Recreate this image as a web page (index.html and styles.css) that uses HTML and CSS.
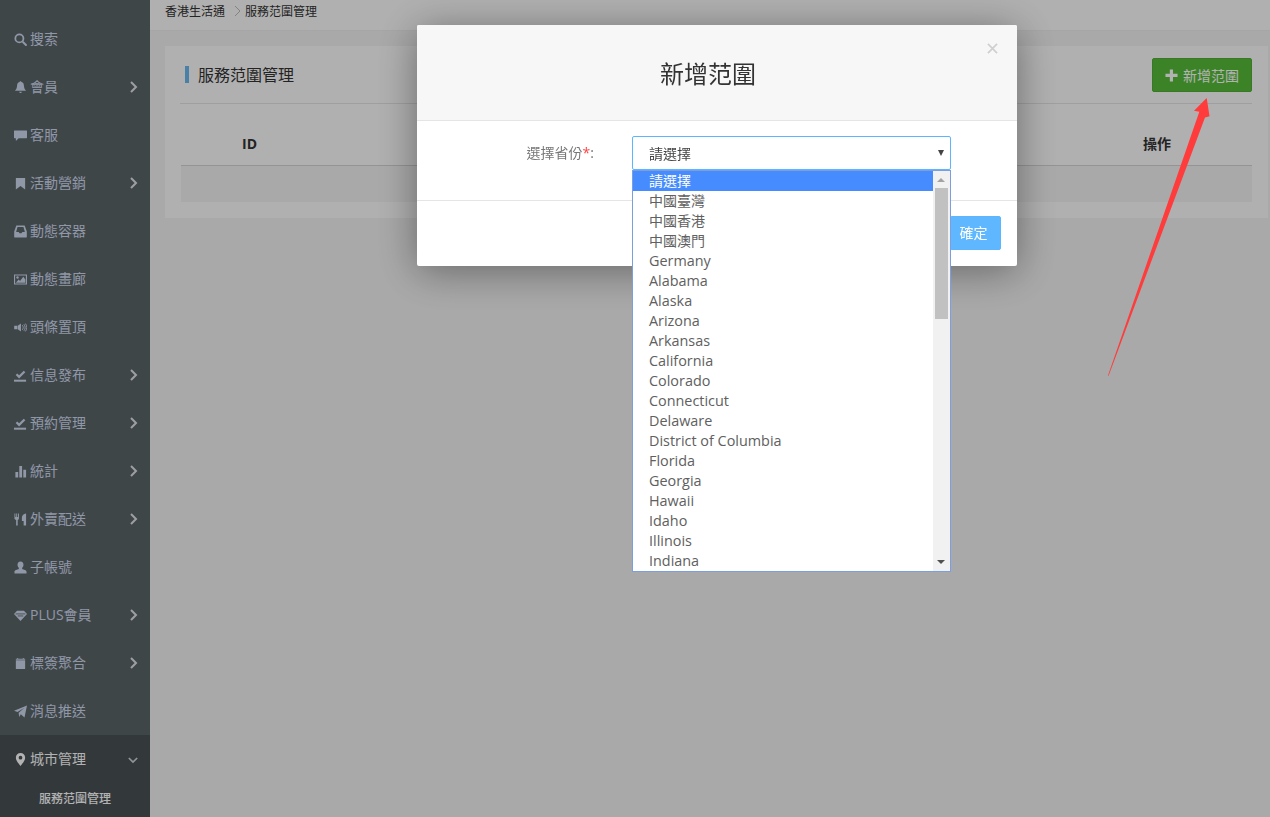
FILE: index.html
```html
<!DOCTYPE html>
<html lang="zh-Hant">
<head>
<meta charset="utf-8">
<title>服務范圍管理</title>
<link rel="stylesheet" href="styles.css">
</head>
<body>
<svg class="defs" width="0" height="0" aria-hidden="true">
  <symbol id="i-search" viewBox="0 0 14 14"><path d="M5.800 0.500a5.300 5.300 0 1 0 0 10.600a5.300 5.300 0 0 0 0-10.600zm0 1.900a3.400 3.400 0 1 1 0 6.800a3.400 3.400 0 0 1 0-6.800z" fill-rule="evenodd"/><path d="M8.600 10.200l1.500-1.500 3.500 3.500a1 1 0 0 1-1.500 1.500z"/></symbol>
  <symbol id="i-bell" viewBox="0 0 14 14"><path d="M7 0.200c.7 0 1 .5 1 1 2 .5 2.600 2 2.700 4 .1 2.600 1 3.900 2.300 5.400H1c1.300-1.500 2.200-2.800 2.300-5.400.1-2 .7-3.500 2.700-4 0-.5.300-1 1-1zM5.600 11.500h2.800a1.400 1.400 0 0 1-2.800 0z"/></symbol>
  <symbol id="i-comment" viewBox="0 0 14 14"><path d="M0.500 1.500h13c.3 0 .5.200.5.500v7.500c0 .3-.2.500-.5.500H5l-3 3V10H.5c-.3 0-.5-.2-.5-.5V2c0-.3.200-.5.500-.5z"/></symbol>
  <symbol id="i-bookmark" viewBox="0 0 14 14"><path d="M2 1h10v12.500L7 9.800 2 13.500z"/></symbol>
  <symbol id="i-inbox" viewBox="0 0 14 14"><path fill-rule="evenodd" d="M2.500 .5h9l2.300 6.500v6a.5.500 0 0 1-.5.500H.7a.5.500 0 0 1-.5-.500V7zM3.800 2.200L2.300 7.500h2.700l1 1.500h2l1-1.500h2.700l-1.500-5.300z"/></symbol>
  <symbol id="i-picture" viewBox="0 0 14 14"><path fill-rule="evenodd" d="M0 1.500h14v11H0zM1.200 2.700v8.600h11.600V2.700z"/><path d="M2 10.500l3-3.500 1.500 1.500 3.500-4.500 2.200 3v3.500z"/><circle cx="3.800" cy="4.800" r="1.300"/></symbol>
  <symbol id="i-volume" viewBox="0 0 14 14"><path d="M0.200 5h3.300v4H.2zM4 5L7.500 2.800v8.400L4 9z"/><path d="M9 4.500c1.200 1.600 1.200 3.500 0 5M10.700 3.500c1.700 2.200 1.700 5 0 7M12.300 2.800c2 2.600 2 5.800 0 8.400" fill="none" stroke="currentColor"/></symbol>
  <symbol id="i-saved" viewBox="0 0 14 14"><path d="M1.800 6.500l1.700-1.700 2 2L10.500 1.800l1.700 1.700-6.700 6.700z"/><path d="M0 11.500h13v2.200H0z"/></symbol>
  <symbol id="i-stats" viewBox="0 0 14 14"><path d="M1.500 7.500h3V13.500h-3zM5.700 1h3V13.500h-3zM10 5h3V13.500h-3z"/></symbol>
  <symbol id="i-cutlery" viewBox="0 0 14 14"><path d="M0.500 .5h1v3.800h.9V.5h1v3.800h.9V.5h1v5.500c0 .8-.7 1.300-1.300 1.500V13.500H2.300V7.500C1.600 7.300.5 6.800.5 6zM8.500 5c0-2 1.500-4.200 4.500-4.500V13.500H10.400V8.500H8.500z"/></symbol>
  <symbol id="i-user" viewBox="0 0 14 14"><path d="M7 .5c2.200 0 3.200 1.500 3.200 3.500 0 1.400-.5 2.700-1.400 3.400v1.100c1.600.6 4.700 1 4.700 3.200v1.800H.5V11.700c0-2.200 3.100-2.600 4.700-3.200V7.400C4.300 6.700 3.800 5.400 3.800 4 3.800 2 4.800.5 7 .5z"/></symbol>
  <symbol id="i-gem" viewBox="0 0 14 14"><path d="M3.300 1.800h7.400l3.300 3.700L7 13 0 5.500z"/><path d="M1.800 5.300h10.400M4 7.500h6" fill="none" stroke="#5b6568" stroke-width=".9"/></symbol>
  <symbol id="i-calendar" viewBox="0 0 14 14"><path d="M2 1.800h1.500V1h1v.8h5V1h1v.8H12V3H2zM2 3.600h10V13H2z"/></symbol>
  <symbol id="i-send" viewBox="0 0 14 14"><path d="M14 .5L11.300 13.500 7.300 9.900 5.600 13 5 8.300 11 3.200 3.800 7.500 0 6.300z"/></symbol>
  <symbol id="i-marker" viewBox="0 0 14 14"><path fill-rule="evenodd" d="M7 0a5 5 0 0 1 5 5C12 8.300 8.500 11.700 7 14 5.500 11.700 2 8.300 2 5A5 5 0 0 1 7 0zM7 3a2 2 0 1 0 0 4a2 2 0 0 0 0-4z"/></symbol>
  <symbol id="i-right" viewBox="0 0 8 12"><path d="M1 1l5 5-5 5" fill="none" stroke="currentColor" stroke-width="2"/></symbol>
  <symbol id="i-down" viewBox="0 0 12 8"><path d="M1 1l5 5 5-5" fill="none" stroke="currentColor" stroke-width="2"/></symbol>
  <symbol id="i-plus" viewBox="0 0 14 14"><path d="M5.200 0.500h3.400v4.700h4.900v3.400H8.600v4.900H5.200V8.600H.5V5.200h4.700z"/></symbol>
  <symbol id="i-close" viewBox="0 0 12 12"><path d="M1 1l10 10M11 1L1 11" fill="none" stroke="currentColor" stroke-width="1.800"/></symbol>
</svg>

<div class="app">
  <nav class="sidebar">
    <a class="nav-item"><svg class="nav-icon"><use href="#i-search"/></svg><span class="nav-label">搜索</span></a>
    <a class="nav-item"><svg class="nav-icon"><use href="#i-bell"/></svg><span class="nav-label">會員</span><svg class="nav-caret"><use href="#i-right"/></svg></a>
    <a class="nav-item"><svg class="nav-icon"><use href="#i-comment"/></svg><span class="nav-label">客服</span></a>
    <a class="nav-item"><svg class="nav-icon"><use href="#i-bookmark"/></svg><span class="nav-label">活動營銷</span><svg class="nav-caret"><use href="#i-right"/></svg></a>
    <a class="nav-item"><svg class="nav-icon"><use href="#i-inbox"/></svg><span class="nav-label">動態容器</span></a>
    <a class="nav-item"><svg class="nav-icon"><use href="#i-picture"/></svg><span class="nav-label">動態畫廊</span></a>
    <a class="nav-item"><svg class="nav-icon"><use href="#i-volume"/></svg><span class="nav-label">頭條置頂</span></a>
    <a class="nav-item"><svg class="nav-icon"><use href="#i-saved"/></svg><span class="nav-label">信息發布</span><svg class="nav-caret"><use href="#i-right"/></svg></a>
    <a class="nav-item"><svg class="nav-icon"><use href="#i-saved"/></svg><span class="nav-label">預約管理</span><svg class="nav-caret"><use href="#i-right"/></svg></a>
    <a class="nav-item"><svg class="nav-icon"><use href="#i-stats"/></svg><span class="nav-label">統計</span><svg class="nav-caret"><use href="#i-right"/></svg></a>
    <a class="nav-item"><svg class="nav-icon"><use href="#i-cutlery"/></svg><span class="nav-label">外賣配送</span><svg class="nav-caret"><use href="#i-right"/></svg></a>
    <a class="nav-item"><svg class="nav-icon"><use href="#i-user"/></svg><span class="nav-label">子帳號</span></a>
    <a class="nav-item"><svg class="nav-icon"><use href="#i-gem"/></svg><span class="nav-label">PLUS會員</span><svg class="nav-caret"><use href="#i-right"/></svg></a>
    <a class="nav-item"><svg class="nav-icon"><use href="#i-calendar"/></svg><span class="nav-label">標簽聚合</span><svg class="nav-caret"><use href="#i-right"/></svg></a>
    <a class="nav-item"><svg class="nav-icon"><use href="#i-send"/></svg><span class="nav-label">消息推送</span></a>
    <div class="nav-group">
      <a class="nav-item nav-item-open"><svg class="nav-icon"><use href="#i-marker"/></svg><span class="nav-label">城市管理</span><svg class="nav-caret-down"><use href="#i-down"/></svg></a>
      <a class="nav-sub">服務范圍管理</a>
    </div>
  </nav>

  <main class="main">
    <div class="crumbs">
      <span>香港生活通</span>
      <svg class="crumb-sep" viewBox="0 0 8 12"><path d="M1 1l5 5-5 5" fill="none" stroke="currentColor"/></svg>
      <span>服務范圍管理</span>
    </div>
    <div class="content">
      <section class="card">
        <header class="card-head">
          <h2 class="card-title">服務范圍管理</h2>
          <button class="btn-add"><svg class="btn-add-icon"><use href="#i-plus"/></svg>新增范圍</button>
        </header>
        <div class="table-head"><span>ID</span><span>操作</span></div>
        <div class="table-empty"></div>
      </section>
    </div>
  </main>
</div>

<div class="overlay"></div>

<div class="modal">
  <header class="modal-head">
    <h1 class="modal-title">新增范圍</h1>
    <svg class="modal-close"><use href="#i-close"/></svg>
  </header>
  <div class="modal-body">
    <label class="field-label">選擇省份<span class="req">*</span>:</label>
    <div class="select">
      <span>請選擇</span>
      <i class="select-caret"></i>
      <div class="dropdown">
        <ul class="options">
          <li class="option-active">請選擇</li>
          <li>中國臺灣</li>
          <li>中國香港</li>
          <li>中國澳門</li>
          <li class="option-latin">Germany</li>
          <li class="option-latin">Alabama</li>
          <li class="option-latin">Alaska</li>
          <li class="option-latin">Arizona</li>
          <li class="option-latin">Arkansas</li>
          <li class="option-latin">California</li>
          <li class="option-latin">Colorado</li>
          <li class="option-latin">Connecticut</li>
          <li class="option-latin">Delaware</li>
          <li class="option-latin">District of Columbia</li>
          <li class="option-latin">Florida</li>
          <li class="option-latin">Georgia</li>
          <li class="option-latin">Hawaii</li>
          <li class="option-latin">Idaho</li>
          <li class="option-latin">Illinois</li>
          <li class="option-latin">Indiana</li>
        </ul>
        <div class="scrollbar">
          <i class="scroll-up"></i>
          <div class="scroll-thumb"></div>
          <i class="scroll-down"></i>
        </div>
      </div>
    </div>
  </div>
  <footer class="modal-foot"><button class="btn-ok">確定</button></footer>
</div>

<svg class="arrow" viewBox="0 0 1270 817" aria-hidden="true">
  <polygon points="1206.700,98 1209.500,116.300 1205,117.500 1108.500,376 1108,375.500 1199.300,111.700 1194,110.700"/>
</svg>
</body>
</html>
```

FILE: styles.css
```css
* { box-sizing: border-box; }

html, body {
  margin: 0;
  height: 817px;
  overflow: hidden;
}

body {
  font-family: "Open Sans", "Noto Sans CJK TC", sans-serif;
  font-size: 14px;
  color: #333;
  background: #f2f2f2;
}

.defs { position: absolute; }

.app {
  display: flex;
  height: 817px;
}

/* sidebar */
.sidebar {
  flex: 0 0 150px;
  height: 817px;
  padding-top: 15px;
  background: #5b6568;
  overflow: hidden;
}

.nav-item {
  display: flex;
  align-items: center;
  height: 48px;
  padding-left: 14px;
  color: #ced8ee;
}

.nav-icon {
  flex: 0 0 13px;
  width: 13px;
  height: 13px;
  margin-right: 3px;
  fill: currentColor;
}

.nav-label { flex: 1; line-height: 20px; }

.nav-caret {
  flex: 0 0 8px;
  width: 8px;
  height: 12px;
  margin-right: 12px;
  color: #e0e4ea;
}

.nav-caret-down {
  flex: 0 0 10px;
  width: 10px;
  height: 7px;
  margin: 2px 12px 0 0;
  color: #d0d6dc;
}

.nav-group { background: #495155; }

.nav-item-open { color: #fff; }

.nav-sub {
  display: block;
  height: 34px;
  padding: 7px 0 0 39px;
  font-size: 12px;
  font-weight: 500;
  line-height: 18px;
  color: #fff;
}

/* main */
.main {
  flex: 1;
  min-width: 0;
}

.crumbs {
  display: flex;
  align-items: center;
  height: 31px;
  padding: 0 0 8px 15px;
  font-size: 12px;
  color: #333;
  background: #fdfdfd;
  border-bottom: 1px solid #eee;
}

.crumb-sep {
  width: 8px;
  height: 12px;
  margin: 0 3px 0 9px;
  color: #bbb;
}

.content { padding: 15px 2px 0 15px; }

.card {
  height: 172px;
  padding: 0 15px;
  background: #fcfcfc;
}

.card-head {
  display: flex;
  align-items: flex-start;
  justify-content: space-between;
  height: 58px;
  margin-right: 1px;
  padding: 12px 0 0 5px;
  border-bottom: 1px solid #e4e4e4;
}

.card-title {
  height: 17px;
  margin: 8px 0 0;
  padding: 1px 0 0 9px;
  border-left: 4px solid #6bb8f0;
  font-size: 16px;
  font-weight: 400;
  line-height: 17px;
  color: #333;
}

.btn-add {
  display: flex;
  align-items: center;
  justify-content: center;
  width: 100px;
  height: 34px;
  padding: 0;
  border: 1px solid #52ac37;
  border-radius: 2px;
  font: inherit;
  color: #fff;
  background: #56bc38;
}

.btn-add-icon {
  width: 13px;
  height: 13px;
  margin-right: 5px;
  fill: currentColor;
}

.table-head {
  display: flex;
  justify-content: space-between;
  height: 62px;
  margin: 0 1px;
  padding: 30px 81px 0 61px;
  font-weight: 700;
  line-height: 20px;
  color: #333;
  border-bottom: 1px solid #d4d4d4;
}

.table-empty {
  height: 36px;
  margin: 0 1px;
  background: #f3f3f3;
}

/* overlay and modal */
.overlay {
  position: fixed;
  inset: 0;
  background: rgba(0, 0, 0, .3);
}

.modal {
  position: fixed;
  left: 417px;
  top: 25px;
  width: 600px;
  height: 241px;
  border-radius: 2px;
  background: #fff;
  box-shadow: 0 5px 40px rgba(0, 0, 0, .4);
}

.modal-head {
  position: relative;
  height: 96px;
  background: #f7f7f7;
  border-bottom: 1px solid #e5e5e5;
  border-radius: 2px 2px 0 0;
}

.modal-title {
  margin: 0;
  padding: 32px 18px 0 0;
  font-size: 24px;
  font-weight: 400;
  line-height: 34px;
  text-align: center;
  color: #333;
}

.modal-close {
  position: absolute;
  top: 18px;
  right: 19px;
  width: 11px;
  height: 11px;
  color: #cfcfcf;
}

.modal-body {
  display: grid;
  grid-template-columns: 177px 319px;
  column-gap: 38px;
  height: 80px;
  padding-top: 15px;
  border-bottom: 1px solid #e5e5e5;
}

.field-label {
  line-height: 34px;
  text-align: right;
  color: #777;
}

.req { color: #f44; }

.select {
  position: relative;
  height: 34px;
  padding-left: 16px;
  line-height: 34px;
  color: #444;
  border: 1px solid #5cb6ff;
  border-radius: 2px;
}

.select-caret {
  position: absolute;
  top: 13px;
  right: 6px;
  border-style: solid;
  border-width: 6px 3.5px 0;
  border-color: #444 transparent transparent;
}

.dropdown {
  position: absolute;
  top: 33px;
  left: -1px;
  display: flex;
  width: 319px;
  height: 402px;
  background: #fff;
  border: 1px solid #7b9ee0;
  z-index: 2;
}

.options {
  flex: 1;
  margin: 0;
  padding: 0;
  list-style: none;
  line-height: 20px;
  color: #606060;
}

.options li {
  height: 20px;
  padding-left: 16px;
  white-space: nowrap;
}

.options .option-latin { font-size: 14.4px; }

.options .option-active {
  color: #fff;
  background: #468cff;
}

.scrollbar {
  position: relative;
  flex: 0 0 17px;
  padding: 17px 2px;
  background: #f1f1f1;
}

.scroll-thumb {
  height: 131px;
  background: #c1c1c1;
}

.scroll-up,
.scroll-down {
  position: absolute;
  left: 4px;
  border-style: solid;
  border-color: transparent;
}

.scroll-up {
  top: 7px;
  border-width: 0 4px 4px;
  border-bottom-color: #a3a3a3;
}

.scroll-down {
  bottom: 7px;
  border-width: 4px 4px 0;
  border-top-color: #505050;
}

.modal-foot {
  display: flex;
  justify-content: flex-end;
  padding: 15px 16px 0 0;
}

.btn-ok {
  width: 51px;
  height: 34px;
  padding: 0 4px 2px 0;
  border: 1px solid #5cb6ff;
  border-radius: 2px;
  font: inherit;
  color: #fff;
  background: #5fb8ff;
}

.arrow {
  position: fixed;
  inset: 0;
  width: 1270px;
  height: 817px;
  fill: #ff3b3b;
  pointer-events: none;
}
```
